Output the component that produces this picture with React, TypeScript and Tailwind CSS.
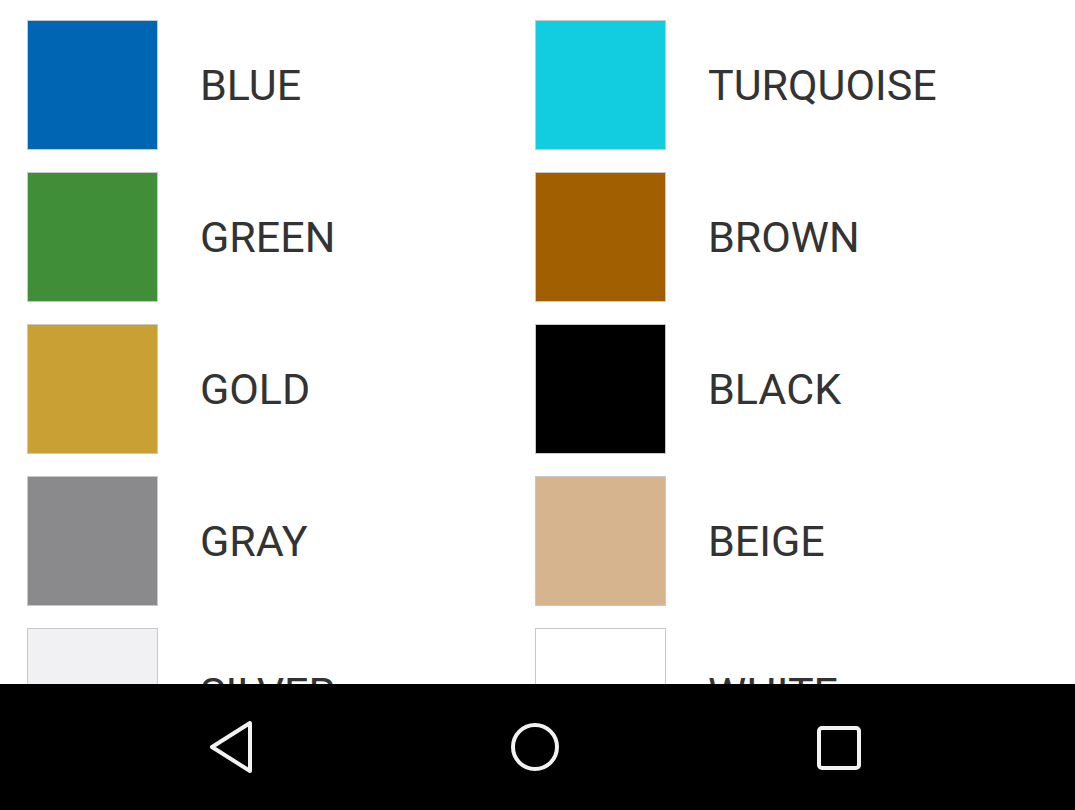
const rows: [string, string, string, string][] = [
  ["BLUE", "#0066b3", "TURQUOISE", "#12cde0"],
  ["GREEN", "#418e38", "BROWN", "#a15f02"],
  ["GOLD", "#c9a033", "BLACK", "#000000"],
  ["GRAY", "#8a8a8c", "BEIGE", "#d5b48e"],
  ["SILVER", "#f1f0f2", "WHITE", "#ffffff"],
];

function Swatch({ name, color }: { name: string; color: string }) {
  return (
    <div className="flex items-center">
      <div
        className="w-[131px] h-[130px] border border-[#c8c8c8] shrink-0"
        style={{ backgroundColor: color }}
      />
      <span className="ml-[42px] text-[43px] leading-none text-[#333333] font-['Roboto',sans-serif]">
        {name}
      </span>
    </div>
  );
}

export default function App() {
  return (
    <div className="w-[1075px] h-[810px] flex flex-col bg-white overflow-hidden">
      {/* Color list */}
      <div className="h-[684px] overflow-hidden pt-[20px]">
        <div className="flex flex-col gap-[22px]">
          {rows.map(([a, ca, b, cb]) => (
            <div key={a} className="grid grid-cols-[508px_1fr] pl-[27px]">
              <Swatch name={a} color={ca} />
              <Swatch name={b} color={cb} />
            </div>
          ))}
        </div>
      </div>

      {/* Navigation bar */}
      <div className="h-[126px] bg-black flex items-center">
        <div className="w-[535px] relative h-full">
          <svg
            width="48"
            height="56"
            viewBox="0 0 48 56"
            className="absolute left-[207px] top-[35px]"
          >
            <path
              d="M43 4 L43 52 L5 28 Z"
              fill="none"
              stroke="#f2f2f2"
              strokeWidth="4"
              strokeLinejoin="round"
            />
          </svg>
          <svg
            width="52"
            height="52"
            viewBox="0 0 52 52"
            className="absolute left-[509px] top-[37px]"
          >
            <circle cx="26" cy="26" r="22" fill="none" stroke="#f2f2f2" strokeWidth="4" />
          </svg>
        </div>
        <div className="relative h-full flex-1">
          <svg
            width="48"
            height="48"
            viewBox="0 0 48 48"
            className="absolute left-[280px] top-[40px]"
          >
            <rect x="4" y="4" width="40" height="40" rx="3" fill="none" stroke="#f2f2f2" strokeWidth="4" />
          </svg>
        </div>
      </div>
    </div>
  );
}
